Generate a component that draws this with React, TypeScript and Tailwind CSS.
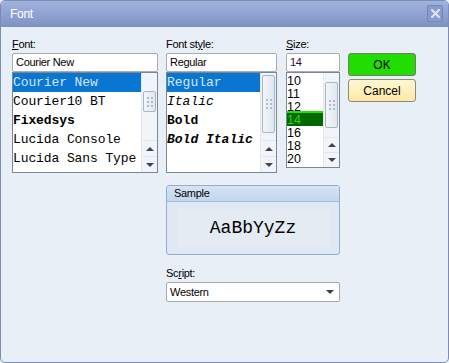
import React from 'react';

const sans = "font-['Liberation_Sans',Arial,sans-serif]";
const mono = "font-['Liberation_Mono','Courier_New',monospace]";

function Grip() {
  return (
    <div className="grid grid-cols-2 gap-x-[2px] gap-y-[2px]">
      {[0, 1, 2, 3, 4, 5].map((i) => (
        <span key={i} className="block w-[2px] h-[2px] bg-[#aebccb]" />
      ))}
    </div>
  );
}

function ArrowUp() {
  return <span className="block w-0 h-0 border-x-[4px] border-x-transparent border-b-[4px] border-b-[#3f4652]" />;
}

function ArrowDown() {
  return <span className="block w-0 h-0 border-x-[4px] border-x-transparent border-t-[4px] border-t-[#3f4652]" />;
}

// thumb place is given as full class names per list
function ScrollBar({ thumb, arrowH }: { thumb: string; arrowH: string }) {
  return (
    <div className="flex flex-col w-[16px] h-full bg-[#f1f4f8] border-l border-[#e3e8ee]">
      <div className="flex-1 px-[1px]">
        <div
          className={`${thumb} flex items-center justify-center rounded-[2px] border border-[#a7b5c5] bg-gradient-to-r from-[#f3f6fa] to-[#dfe7f0]`}
        >
          <Grip />
        </div>
      </div>
      <div className={`${arrowH} flex items-center justify-center border-t border-[#e0e6ec]`}>
        <ArrowUp />
      </div>
      <div className={`${arrowH} flex items-center justify-center border-t border-[#e0e6ec]`}>
        <ArrowDown />
      </div>
    </div>
  );
}

function Label({ pre, key1, post }: { pre: string; key1: string; post: string }) {
  return (
    <div className="h-[13px] leading-[13px] mb-[2px] text-[11px] tracking-[-0.3px] text-black whitespace-nowrap">
      {pre}
      <span className="underline underline-offset-[1px]">{key1}</span>
      {post}
    </div>
  );
}

function Field({ value, color }: { value: string; color?: string }) {
  return (
    <div
      className={`h-[19px] flex items-center pl-[3px] bg-white border border-[#a9adb3] rounded-[2px] text-[11px] tracking-[-0.3px] ${color ?? 'text-black'}`}
    >
      {value}
    </div>
  );
}

const fonts = [
  { name: 'Courier New', cls: '' },
  { name: 'Courier10 BT', cls: '' },
  { name: 'Fixedsys', cls: 'font-bold' },
  { name: 'Lucida Console', cls: '' },
  { name: 'Lucida Sans Type', cls: '' },
];

const styles = [
  { name: 'Regular', cls: '' },
  { name: 'Italic', cls: 'italic' },
  { name: 'Bold', cls: 'font-bold' },
  { name: 'Bold Italic', cls: 'font-bold italic' },
];

const sizes = ['10', '11', '12', '14', '16', '18', '20'];

export default function App() {
  return (
    <div className={`w-[449px] h-[363px] bg-[#e9f0f8] ${sans}`}>
      <div className="flex flex-col w-full h-full border border-[#7c8cb5] rounded-[5px] overflow-hidden bg-[#e8eff7]">
        {/* title bar */}
        <div className="h-[26px] shrink-0 flex items-center justify-between pl-[9px] pr-[5px] bg-gradient-to-b from-[#a0b2de] via-[#90a2d2] to-[#8092c1]">
          <span className="text-white text-[12px] tracking-[-0.3px]">Font</span>
          <div className="w-[16px] h-[17px] mt-[-1px] flex items-center justify-center rounded-[2px] border border-[#7485b6] bg-[#8a9ccd]">
            <svg width="9" height="9" viewBox="0 0 9 9">
              <path d="M1 1 L8 8 M8 1 L1 8" stroke="#dbe3f5" strokeWidth="2.2" strokeLinecap="square" />
            </svg>
          </div>
        </div>

        {/* body */}
        <div className="grid grid-cols-[146px_112px_54px_68px] gap-x-[8px] pl-[11px] pt-[11px]">
          {/* font */}
          <div className="flex flex-col">
            <Label pre="" key1="F" post="ont:" />
            <Field value="Courier New" />
            <div className="h-[101px] flex bg-white border border-[#7b8794]">
              <div className={`flex-1 overflow-hidden ${mono} text-[13px] tracking-[-0.1px]`}>
                {fonts.map((f, i) => (
                  <div
                    key={f.name}
                    className={`h-[19px] leading-[20px] whitespace-nowrap ${f.cls} ${
                      i === 0 ? 'bg-[#0a76d4] text-[#d6e6f7]' : 'text-black'
                    }`}
                  >
                    {f.name}
                  </div>
                ))}
              </div>
              <ScrollBar thumb="mt-[18px] h-[21px]" arrowH="h-[16px]" />
            </div>
          </div>

          {/* font style */}
          <div className="flex flex-col">
            <Label pre="Font st" key1="y" post="le:" />
            <div className="w-[111px]">
              <Field value="Regular" />
            </div>
            <div className="w-[111px] h-[101px] flex bg-white border border-[#7b8794]">
              <div className={`flex-1 overflow-hidden ${mono} text-[13px]`}>
                {styles.map((s, i) => (
                  <div
                    key={s.name}
                    className={`h-[19px] leading-[20px] whitespace-nowrap ${s.cls} ${
                      i === 0 ? 'bg-[#0a76d4] text-[#d6e6f7]' : 'text-black'
                    }`}
                  >
                    {s.name}
                  </div>
                ))}
              </div>
              <ScrollBar thumb="mt-[2px] h-[58px]" arrowH="h-[16px]" />
            </div>
          </div>

          {/* size */}
          <div className="flex flex-col">
            <Label pre="" key1="S" post="ize:" />
            <Field value="14" color="text-[#2b0d2e]" />
            <div className="h-[96px] flex bg-white border border-[#7b8794]">
              <div className="flex-1 overflow-hidden text-[12.5px] pt-[1px]">
                {sizes.map((s) =>
                  s === '14' ? (
                    <div
                      key={s}
                      className="h-[13px] leading-[14px] bg-[#006a00] text-[#35d20a] shadow-[0_-2px_0_#22e000]"
                    >
                      {s}
                    </div>
                  ) : (
                    <div key={s} className="h-[13px] leading-[14px] text-black">
                      {s}
                    </div>
                  )
                )}
              </div>
              <ScrollBar thumb="mt-[9px] h-[46px]" arrowH="h-[15px]" />
            </div>
          </div>

          {/* buttons */}
          <div className="flex flex-col pt-[15px] gap-[3px]">
            <div className="h-[23px] flex items-center justify-center rounded-[3px] border border-[#77776a] bg-[#22dd00] text-[12px] text-black">
              OK
            </div>
            <div className="h-[23px] flex items-center justify-center rounded-[3px] border border-[#8c8a78] bg-gradient-to-b from-[#fff7d4] to-[#ffe8a4] text-[12px] text-black">
              Cancel
            </div>
          </div>

          {/* sample */}
          <div className="col-start-2 col-span-2 mt-[12px] h-[70px] flex flex-col rounded-[3px] border border-[#95acd0] bg-[#dfe8f3] overflow-hidden">
            <div className="h-[16px] shrink-0 flex items-center pl-[7px] border-b border-[#a7bcd8] bg-gradient-to-b from-[#d6e4f4] to-[#c3d6ee] text-[11px] tracking-[-0.3px] text-black">
              Sample
            </div>
            <div className="flex-1 px-[10px] py-[7px]">
              <div className={`h-full flex items-center justify-center bg-[#e5ebf3] ${mono} text-[18px] text-black`}>
                AaBbYyZz
              </div>
            </div>
          </div>

          {/* script */}
          <div className="col-start-2 col-span-2 mt-[12px] flex flex-col">
            <Label pre="Sc" key1="r" post="ipt:" />
            <div className="h-[20px] flex items-center justify-between pl-[3px] pr-[5px] bg-white border border-[#a6a9ae] rounded-[2px] text-[11px] tracking-[-0.3px] text-black">
              <span>Western</span>
              <span className="block w-0 h-0 border-x-[4px] border-x-transparent border-t-[4px] border-t-[#3a3f4c]" />
            </div>
          </div>
        </div>
      </div>
    </div>
  );
}
